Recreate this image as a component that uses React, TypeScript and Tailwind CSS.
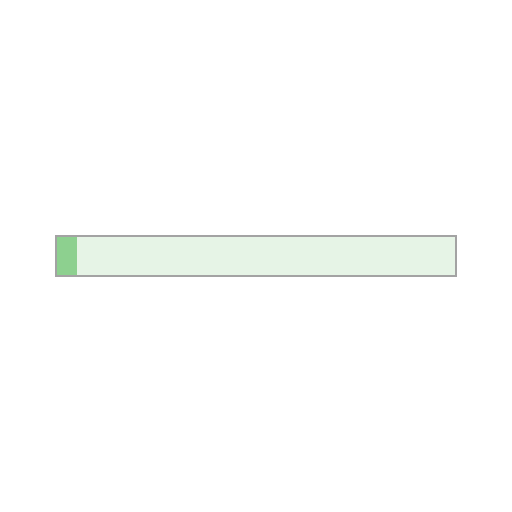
const progress = 5;

export default function App() {
  return (
    <div className="flex h-[512px] w-[512px] items-center justify-center bg-white">
      <div className="h-[42px] w-[402px] border-2 border-[#a3a3a3] bg-[#e6f4e6]">
        <div className="h-full bg-[#8dd08f]" style={{ width: `${progress}%` }} />
      </div>
    </div>
  );
}
